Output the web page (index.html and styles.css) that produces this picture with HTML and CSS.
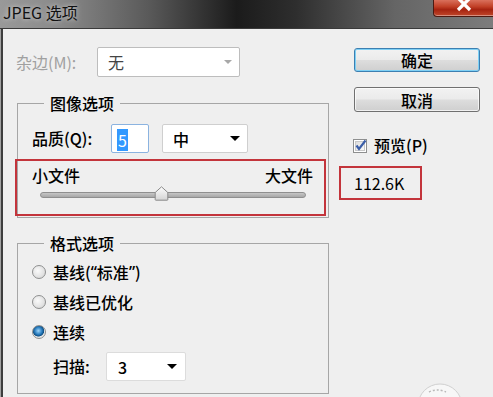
FILE: index.html
```html
<!DOCTYPE html>
<html lang="zh-CN">
<head>
  <meta charset="UTF-8">
  <title>JPEG 选项</title>
  <link rel="stylesheet" href="styles.css">
</head>
<body>
  <div class="window">
    <div class="titlebar">
      <span class="title">JPEG 选项</span>
      <span class="close">
        <svg width="16" height="12" viewBox="0 0 16 12"><path d="M2 -2 L14 10 M14 -2 L2 10" stroke="#fff" stroke-width="3.2"/></svg>
      </span>
    </div>

    <div class="dialog">
      <div class="main">
        <div class="row matte">
          <span class="label label-disabled">杂边(M):</span>
          <div class="select select-matte select-disabled"><span>无</span><span class="arrow"></span></div>
        </div>

        <fieldset class="group group-image">
          <legend>图像选项</legend>
          <div class="row quality">
            <span class="label label-quality">品质(Q):</span>
            <div class="num-input"><span class="selected">5</span></div>
            <div class="select select-quality"><span>中</span><span class="arrow"></span></div>
          </div>
          <div class="mark size-range">
            <div class="range-labels"><span>小文件</span><span>大文件</span></div>
            <div class="slider">
              <div class="track"></div>
              <svg class="thumb" style="left: 45.5%" width="15" height="15" viewBox="0 0 15 15">
                <defs>
                  <linearGradient id="tg" x1="0" y1="0" x2="0" y2="1">
                    <stop offset="0" stop-color="#fdfdfd"/>
                    <stop offset="1" stop-color="#d4d4d4"/>
                  </linearGradient>
                </defs>
                <path d="M7.5 0.8 L13.8 6.5 L13.8 13.6 Q13.8 14.2 13.2 14.2 L1.8 14.2 Q1.2 14.2 1.2 13.6 L1.2 6.5 Z" fill="url(#tg)" stroke="#8a8a8a"/>
              </svg>
            </div>
          </div>
        </fieldset>

        <fieldset class="group group-format">
          <legend>格式选项</legend>
          <div class="radio"><span class="dot"></span>基线(<span class="q">“</span>标准<span class="q">”</span>)</div>
          <div class="radio"><span class="dot"></span>基线已优化</div>
          <div class="radio"><span class="dot dot-on"></span>连续</div>
          <div class="row scans">
            <span class="label label-scans">扫描:</span>
            <div class="select select-scans"><span>3</span><span class="arrow"></span></div>
          </div>
        </fieldset>
      </div>

      <div class="side">
        <button class="btn btn-default">确定</button>
        <button class="btn btn-cancel">取消</button>
        <div class="check">
          <svg class="box" width="15" height="15" viewBox="0 0 15 15">
            <defs>
              <linearGradient id="cg" x1="0" y1="0" x2="1" y2="1">
                <stop offset="0" stop-color="#dcdcdc"/>
                <stop offset="1" stop-color="#fafafa"/>
              </linearGradient>
            </defs>
            <rect x="0.5" y="1.5" width="13" height="13" fill="#fff" stroke="#8e8f8f"/>
            <rect x="2.5" y="3.5" width="9" height="9" fill="url(#cg)" stroke="#c8c8c8"/>
            <path d="M3.5 7.5 L6 11 L12.5 2.5" fill="none" stroke="#3b5ea8" stroke-width="2.2"/>
          </svg>
          <span>预览(P)</span>
        </div>
        <div class="mark file-size">112.6K</div>
      </div>
    </div>

    <svg class="watermark" width="50" height="20" viewBox="0 0 50 20">
      <circle cx="25" cy="24" r="22" fill="#f7f7f7" stroke="#d0d0d0"/>
      <path d="M14 10 Q22 6 31 10" fill="none" stroke="#b9b9b9" stroke-width="1.5" stroke-dasharray="2 2"/>
    </svg>
  </div>
</body>
</html>
```

FILE: styles.css
```css
body {
  margin: 0;
  font-family: "Noto Sans CJK SC", sans-serif;
  font-size: 16px;
  font-weight: 500;
  color: #000;
  background-color: #efefef;
}
.window {
  position: relative;
  width: 493px;
  height: 397px;
  overflow: hidden;
}
.titlebar {
  height: 28px;
  display: flex;
  justify-content: space-between;
  align-items: flex-start;
  background: linear-gradient(90deg, #999 0%, #8a8a8a 12%, #5a5a5a 30%, #1b1b1b 48%, #2e2e2e 60%, #656565 80%, #7c7c7c 100%);
  border-bottom: 1px solid #3a3a3a;
}
.title {
  padding-left: 3px;
  line-height: 25px;
  font-size: 16px;
  font-weight: 400;
  color: #111;
  text-shadow: 0 0 5px rgba(255, 255, 255, 0.7);
}
.close {
  width: 59px;
  height: 16px;
  display: flex;
  justify-content: center;
  align-items: flex-start;
  background: linear-gradient(#d9705c 0%, #c24128 40%, #a62310 60%, #c0472b 100%);
  border: 1px solid #4c1a12;
  border-top: none;
  border-right: none;
  border-radius: 0 0 0 4px;
  box-shadow: inset 0 -1px 0 rgba(255, 255, 255, 0.4);
}
.dialog {
  height: 368px;
  display: flex;
  padding-left: 3px;
  background: linear-gradient(90deg, #a2a2a2 0, #a2a2a2 1px, #3d3d3d 1px, #3d3d3d 3px, #efefef 3px);
}
.main {
  width: 312px;
  margin-left: 14px;
}
.row {
  display: flex;
  align-items: center;
}
.label {
  line-height: 29px;
}
.label-disabled {
  width: 81px;
  margin-left: -1px;
  font-weight: 400;
  color: #a0a0a0;
}
.matte {
  margin-top: 18px;
  height: 30px;
}
.select {
  box-sizing: border-box;
  display: flex;
  justify-content: space-between;
  align-items: center;
  height: 29px;
  padding: 0 7px 0 10px;
  background-color: #fff;
  border: 1px solid #cfcfcf;
  border-radius: 2px;
}
.arrow {
  width: 0;
  height: 0;
  border-left: 5px solid transparent;
  border-right: 5px solid transparent;
  border-top: 5px solid #000;
}
.select-matte {
  width: 143px;
  height: 30px;
  padding-right: 7px;
  border-color: #bdbdbd;
  font-weight: 400;
  color: #444;
}
.select-matte .arrow {
  border-top-color: #a8a8a8;
  border-left-width: 4px;
  border-right-width: 4px;
  border-top-width: 4px;
}
.group {
  margin: 0;
  padding: 0 14px;
  border: 1px solid #a6a6a6;
  min-width: 0;
}
.group legend {
  margin-left: 12px;
  padding: 0 6px;
  line-height: 18px;
}
.group-image {
  margin-top: 17px;
  padding-top: 12px;
  padding-bottom: 1px;
}
.quality {
  height: 29px;
}
.label-quality {
  width: 79px;
}
.num-input {
  box-sizing: border-box;
  width: 38px;
  height: 29px;
  padding: 3px 0 0 5px;
  background-color: #fff;
  border: 1px solid #8bb3e0;
  border-radius: 2px;
}
.selected {
  display: inline-block;
  padding: 0 1px;
  line-height: 22px;
  font-weight: 400;
  background-color: #3399ff;
  color: #fff;
}
.select-quality {
  width: 86px;
  margin-left: 13px;
}
.mark {
  box-sizing: border-box;
  border: 2px solid #c3343b;
}
.size-range {
  width: 311px;
  margin: 6px 0 0 -17px;
  padding: 4px 0 13px;
}
.range-labels {
  display: flex;
  justify-content: space-between;
  padding: 0 11px 0 15px;
  line-height: 20px;
}
.slider {
  position: relative;
  height: 16px;
  margin: 0 18px 0 23px;
}
.track {
  position: absolute;
  left: 0;
  right: 0;
  top: 7px;
  height: 6px;
  box-sizing: border-box;
  border: 1px solid #8f8f8f;
  border-radius: 3px;
  background: linear-gradient(#c6c6c6, #a8a8a8);
}
.thumb {
  position: absolute;
  top: 1px;
  margin-left: -7px;
}
.group-format {
  margin-top: 16px;
  padding-top: 5px;
  padding-bottom: 12px;
}
.radio {
  display: flex;
  align-items: center;
  height: 30px;
}
.q {
  font-family: "Noto Sans", sans-serif;
}
.dot {
  box-sizing: border-box;
  width: 14px;
  height: 14px;
  margin-left: 0;
  margin-right: 7px;
  border: 1px solid #8e8f8f;
  border-radius: 50%;
  background: radial-gradient(circle at 40% 40%, #fafafa 0%, #e2e2e2 60%, #cfcfcf 100%);
}
.dot-on {
  background: radial-gradient(circle at 45% 40%, #9fd5f7 0%, #2f82c4 35%, #0d4f84 55%, #e6e6e6 62%, #dcdcdc 100%);
}
.scans {
  margin-top: 5px;
  padding-left: 21px;
}
.label-scans {
  width: 53px;
}
.select-scans {
  width: 80px;
  padding-left: 11px;
  padding-right: 8px;
  border-color: #dcdcdc;
}
.side {
  width: 155px;
  margin-left: 10px;
  display: flex;
  flex-direction: column;
  align-items: flex-start;
}
.btn {
  width: 126px;
  margin-left: 15px;
  padding: 0;
  font-family: inherit;
  font-size: 16px;
  font-weight: 500;
  line-height: 20px;
  color: #000;
  border: 1px solid #707070;
  border-radius: 3px;
  background: linear-gradient(#f2f2f2 0%, #ebebeb 48%, #dddddd 52%, #cfcfcf 100%);
  box-shadow: inset 0 0 0 1px rgba(255, 255, 255, 0.7);
}
.btn-default {
  height: 24px;
  margin-top: 19px;
  border-color: #3c7fb1;
  box-shadow: inset 0 0 0 1px #7ed0f5;
}
.btn-cancel {
  height: 25px;
  margin-top: 15px;
}
.check {
  display: flex;
  align-items: center;
  margin: 24px 0 0 14px;
  height: 18px;
}
.check .box {
  margin-right: 6px;
}
.file-size {
  width: 83px;
  height: 34px;
  margin-top: 12px;
  padding-left: 13px;
  line-height: 30px;
  font-weight: 400;
}
.watermark {
  position: absolute;
  left: 415px;
  top: 382px;
}
```
